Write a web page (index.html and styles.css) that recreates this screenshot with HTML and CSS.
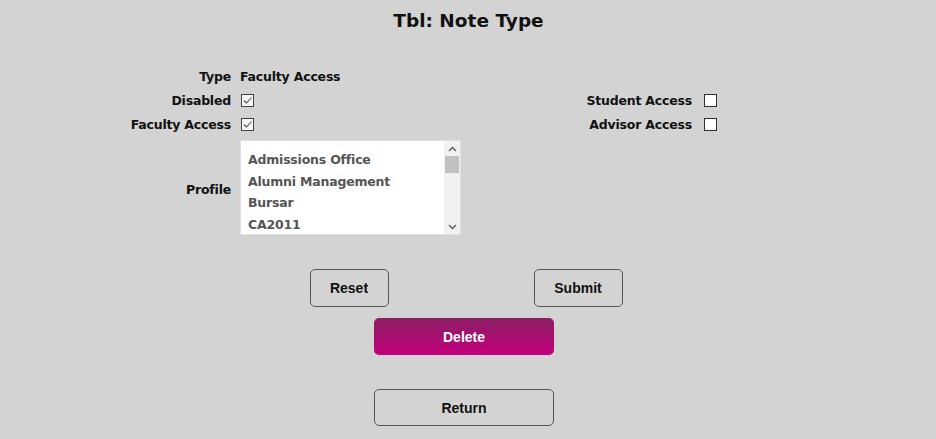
FILE: index.html
```html
<!DOCTYPE html>
<html>
<head>
<meta charset="utf-8">
<link rel="stylesheet" href="styles.css">
</head>
<body>
<div class="page">
  <h1 class="title">Tbl: Note Type</h1>
  <div class="form">
    <div class="label r1">Type</div>
    <div class="value r1">Faculty Access</div>

    <div class="label r2">Disabled</div>
    <div class="value r2"><span class="cb checked"><svg viewBox="0 0 13 13" width="13" height="13"><path d="M3 6.5 L5.5 9 L10.5 3.5" fill="none" stroke="#555" stroke-width="1.1"/></svg></span></div>
    <div class="label2 r2">Student Access</div>
    <div class="value2 r2"><span class="cb"></span></div>

    <div class="label r3">Faculty Access</div>
    <div class="value r3"><span class="cb checked"><svg viewBox="0 0 13 13" width="13" height="13"><path d="M3 6.5 L5.5 9 L10.5 3.5" fill="none" stroke="#555" stroke-width="1.1"/></svg></span></div>
    <div class="label2 r3">Advisor Access</div>
    <div class="value2 r3"><span class="cb"></span></div>

    <div class="label r4 profile-label">Profile</div>
    <div class="value r4">
      <div class="listbox">
        <ul class="items">
          <li>Admissions Office</li>
          <li>Alumni Management</li>
          <li>Bursar</li>
          <li>CA2011</li>
        </ul>
        <div class="scrollbar">
          <div class="arrow"><svg width="9" height="6" viewBox="0 0 9 6"><path d="M1 5 L4.5 1.5 L8 5" fill="none" stroke="#555" stroke-width="1.3"/></svg></div>
          <div class="thumb"></div>
          <div class="track"></div>
          <div class="arrow"><svg width="9" height="6" viewBox="0 0 9 6"><path d="M1 1 L4.5 4.5 L8 1" fill="none" stroke="#555" stroke-width="1.3"/></svg></div>
        </div>
      </div>
    </div>
  </div>
  <div class="actions">
    <div class="row">
      <button class="btn reset">Reset</button>
      <button class="btn submit">Submit</button>
    </div>
    <button class="btn wide delete">Delete</button>
    <button class="btn wide return">Return</button>
  </div>
</div>
</body>
</html>
```

FILE: styles.css
```css
html, body {
  margin: 0;
  padding: 0;
  background: #d3d3d3;
}
body {
  width: 936px;
  height: 439px;
  overflow: hidden;
  font-family: "DejaVu Sans", "Liberation Sans", sans-serif;
  color: #111;
}
.page {
  display: flex;
  flex-direction: column;
}
.title {
  margin: 8px 0 0 0;
  height: 26px;
  line-height: 26px;
  text-align: center;
  font-size: 18.5px;
  font-weight: bold;
  letter-spacing: 0;
  padding-left: 1px;
}
.form {
  display: grid;
  grid-template-columns: 231px 320px 123px 24px;
  column-gap: 9px;
  grid-template-rows: 24px 24px 24px 99px;
  margin-top: 30px;
  font-size: 12.5px;
  font-weight: bold;
  letter-spacing: -0.2px;
  white-space: nowrap;
}
.label, .label2 {
  text-align: right;
  display: flex;
  align-items: center;
  justify-content: flex-end;
}
.label2 { grid-column: 3; }
.value { grid-column: 2; display: flex; align-items: center; }
.value2 { grid-column: 4; display: flex; align-items: center; margin-left: 2px; }
.label { grid-column: 1; }
.r1 { grid-row: 1; }
.r2 { grid-row: 2; }
.r3 { grid-row: 3; }
.r4 { grid-row: 4; }
.profile-label { align-items: flex-start; padding-top: 46px; }
.r4.value { align-items: flex-start; padding-top: 4px; }
.cb {
  display: inline-block;
  width: 11px;
  height: 11px;
  border: 1px solid #333;
  background: #fff;
  margin-left: 1px;
  position: relative;
}
.cb.checked { background: #f4f4f4; border-color: #444; }
.cb svg { position: absolute; left: -1px; top: -1px; }
.listbox {
  width: 221px;
  height: 95px;
  background: #fff;
  display: flex;
  box-sizing: border-box;
  border: 1px solid #e0e0e0;
}
.items {
  list-style: none;
  margin: 0;
  padding: 9px 0 0 7px;
  flex: 1;
  color: #555;
  font-size: 12.5px;
}
.items li {
  height: 21.5px;
  line-height: 19px;
}
.scrollbar {
  width: 16px;
  background: #f1f1f1;
  display: flex;
  flex-direction: column;
}
.arrow {
  height: 15px;
  display: flex;
  align-items: center;
  justify-content: center;
}
.thumb {
  height: 17px;
  background: #c1c1c1;
  margin: 0 1px;
}
.track { flex: 1; }
.actions {
  display: flex;
  flex-direction: column;
  align-items: center;
  margin-top: 34px;
}
.row {
  display: flex;
  gap: 145px;
  margin-right: 4px;
}
.btn {
  font-family: "Liberation Sans", Arial, sans-serif;
  font-weight: bold;
  font-size: 14px;
  color: #111;
  background: transparent;
  border: 1px solid #555;
  border-radius: 5px;
  height: 38px;
  padding: 0;
}
.reset { width: 79px; }
.submit { width: 89px; }
.wide {
  width: 180px;
  height: 37px;
  margin-right: 8px;
}
.delete {
  margin-top: 11px;
  border: none;
  background: linear-gradient(#8c1e63, #c3007b);
  color: #fff;
}
.return {
  margin-top: 34px;
}
```
